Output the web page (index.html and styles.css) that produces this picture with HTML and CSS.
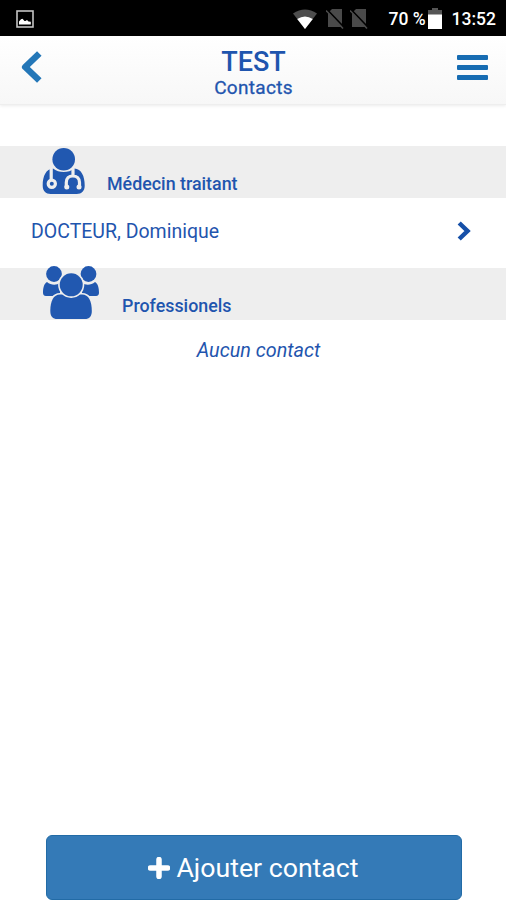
FILE: index.html
```html
<!DOCTYPE html>
<html lang="fr">
<head>
  <meta charset="UTF-8">
  <meta name="viewport" content="width=device-width, initial-scale=1">
  <title>Contacts</title>
  <link rel="stylesheet" href="styles.css">
</head>
<body>
  <div class="status-bar">
    <svg class="status-picture" width="18" height="18" viewBox="0 0 18 18">
      <rect x="1" y="1" width="16" height="16" fill="none" stroke="#c4c4c4" stroke-width="1.6"/>
      <path d="M3 14.5v-3l2-2.3 1.5-.4 2 2.2h1l1.500-1 1.500 1.500 2.300.3v2.700z" fill="#fff"/>
    </svg>
    <svg class="status-wifi" width="24" height="20" viewBox="0 0 24 20">
      <path d="M0 4.5Q12-3.5 24 4.5L12 20z" fill="#4d4d4d"/>
      <path d="M4.2 10Q12 5 19.8 10L12 20z" fill="#fff"/>
    </svg>
    <svg class="status-sim" width="18" height="20" viewBox="0 0 18 20">
      <path d="M6 0h10v18H2V4z" fill="#4a4a4a"/>
      <path d="M1.5 1.2l16.5 17" stroke="#000" stroke-width="1.8"/>
      <path d="M0 1.5l17 18" stroke="#4a4a4a" stroke-width="1.5"/>
    </svg>
    <svg class="status-sim" width="18" height="20" viewBox="0 0 18 20">
      <path d="M6 0h10v18H2V4z" fill="#4a4a4a"/>
      <path d="M1.5 1.2l16.5 17" stroke="#000" stroke-width="1.8"/>
      <path d="M0 1.5l17 18" stroke="#4a4a4a" stroke-width="1.5"/>
    </svg>
    <span class="status-percent">70 %</span>
    <svg class="status-battery" width="14" height="21" viewBox="0 0 14 21">
      <path d="M4 0h6v2h4v5H0V2h4z" fill="#555"/>
      <path d="M0 6.5h14V21H0z" fill="#fff"/>
    </svg>
    <span class="status-time">13:52</span>
  </div>

  <div class="header">
    <svg class="back" width="22" height="32" viewBox="0 0 22 32">
      <path d="M18.3 2.5L4.2 16l14.1 13.5" fill="none" stroke="#2477b8" stroke-width="6.5" stroke-linejoin="round"/>
    </svg>
    <div class="title">
      <h1>TEST</h1>
      <h2>Contacts</h2>
    </div>
    <div class="menu">
      <span></span>
      <span></span>
      <span></span>
    </div>
  </div>

  <div class="contacts">
    <div class="section">
      <svg class="icon-doctor" width="44" height="48" viewBox="0 0 44 48">
        <path d="M11 21.5C4 22 .7 29 .7 38.5c0 5.5 3 8.5 8 8.5h26c5 0 8-3 8-8.5 0-9.5-3.3-16.5-10.3-17-6 4.8-15.4 4.8-21.4 0z" fill="#2158b0"/>
        <g fill="none" stroke="#eee" stroke-width="3.2">
          <path d="M9.2 20v13.5"/>
          <circle cx="9.8" cy="36.8" r="3.6"/>
          <path d="M31 20.5V29M24.3 40v-4.5c0-4 2.5-6.5 6.5-6.5s6.7 2.5 6.7 6.5V40" stroke-linecap="round"/>
        </g>
        <circle cx="24.8" cy="40" r="2.5" fill="#eee"/>
        <circle cx="37" cy="40" r="2.5" fill="#eee"/>
        <circle cx="21.7" cy="12.2" r="11.3" fill="#2158b0"/>
      </svg>
      <span class="section-name">Médecin traitant</span>
    </div>

    <div class="contact">
      <span>DOCTEUR, Dominique</span>
      <svg width="14" height="20" viewBox="0 0 14 20">
        <path d="M2.2 2l8.3 8-8.3 8" fill="none" stroke="#1650a8" stroke-width="4.5"/>
      </svg>
    </div>

    <div class="section section-pro">
      <svg class="icon-group" width="58" height="56" viewBox="0 0 58 56">
        <g fill="#2158b0">
          <path d="M5 18c4 3.5 10 3.5 13 .5V32H4c-2.2 0-3-1.200-3-3.200C1 24 2 19.500 5 18z"/>
          <path d="M53 18c-4 3.500-10 3.500-13 .5V32h14c2.200 0 3-1.200 3-3.200 0-4.800-1-9.300-4-10.800z"/>
          <circle cx="12" cy="10" r="7.9"/>
          <circle cx="46.5" cy="10" r="7.9"/>
        </g>
        <g class="front" fill="#2158b0" stroke="#eee" stroke-width="3.2">
          <path d="M18 30.500c-6.500 0-9.700 6.500-9.700 16.500 0 5.500 2.500 8 7 8h27.500c4.500 0 7-2.500 7-8 0-10-3.200-16.500-9.700-16.500z"/>
          <circle cx="29.2" cy="20.800" r="11.500"/>
        </g>
      </svg>
      <span class="section-name">Professionels</span>
    </div>

    <p class="empty">Aucun contact</p>
  </div>

  <button class="add-button" type="button">
    <svg width="22" height="22" viewBox="0 0 22 22">
      <path d="M11 2.500v17M2.500 11h17" stroke="#fff" stroke-width="5.5" stroke-linecap="round"/>
    </svg>
    <span>Ajouter contact</span>
  </button>
</body>
</html>
```

FILE: styles.css
```css
* {
  box-sizing: border-box;
}

body {
  margin: 0;
  height: 900px;
  display: flex;
  flex-direction: column;
  overflow: hidden;
  background-color: #ffffff;
  color: #1f55ae;
  font-family: Roboto, Arial, sans-serif;
}

svg {
  display: block;
  flex: none;
}

.status-bar {
  display: flex;
  align-items: center;
  height: 36px;
  padding: 1px 10px 0 16px;
  background-color: #000000;
  color: #ffffff;
  font-size: 17.5px;
  font-weight: 500;
  white-space: nowrap;
}

.status-wifi {
  margin-left: auto;
  margin-right: 9px;
}

.status-sim {
  margin-right: 6px;
}

.status-percent {
  margin-left: 14px;
}

.status-battery {
  margin: 0 10px 0 2px;
}

.header {
  display: flex;
  justify-content: space-between;
  height: 69px;
  padding: 0 18px 0 21px;
  background: linear-gradient(#ffffff, #f7f7f7);
  border-bottom: 1px solid #eeeeee;
  box-shadow: 0 1px 3px rgba(0, 0, 0, 0.08);
}

.back {
  margin-top: 15px;
}

.title {
  padding: 11px 0 0 7px;
  text-align: center;
}

.title h1 {
  margin: 0;
  font-size: 27px;
  font-weight: 500;
  line-height: 30px;
}

.title h2 {
  margin: 0;
  font-size: 19px;
  font-weight: 400;
  letter-spacing: 0.3px;
  line-height: 21px;
  -webkit-text-stroke: 0.3px;
}

.menu {
  display: flex;
  flex-direction: column;
  gap: 5px;
  padding-top: 19px;
}

.menu span {
  width: 31px;
  height: 5px;
  border-radius: 1px;
  background-color: #176cb2;
}

.contacts {
  flex: 1;
  padding-top: 41px;
}

.section {
  display: flex;
  align-items: flex-end;
  height: 52px;
  padding: 0 42px 3px;
  background-color: #eeeeee;
}

.section-pro {
  padding-bottom: 0;
}

.section-name {
  margin: 0 0 0 21px;
  font-size: 17.85px;
  font-weight: 500;
  line-height: 22px;
}

.section-pro .section-name {
  margin: 0 0 3px 22px;
}

.front {
  paint-order: stroke;
}

.contact {
  display: flex;
  align-items: center;
  justify-content: space-between;
  height: 70px;
  padding: 0 35px 4px 31px;
  font-size: 19.5px;
}

.empty {
  margin: 19px 0 0 11px;
  font-size: 19.8px;
  font-style: italic;
  line-height: 24px;
  text-align: center;
}

.add-button {
  display: flex;
  flex: none;
  align-items: center;
  justify-content: center;
  gap: 6px;
  width: 416px;
  height: 65px;
  margin: 0 0 0 46px;
  padding: 0 1px 0 0;
  border: 1px solid #226ba6;
  border-radius: 6px;
  background-color: #347ab7;
  color: #ffffff;
  font-family: inherit;
  font-size: 26.7px;
}
```
